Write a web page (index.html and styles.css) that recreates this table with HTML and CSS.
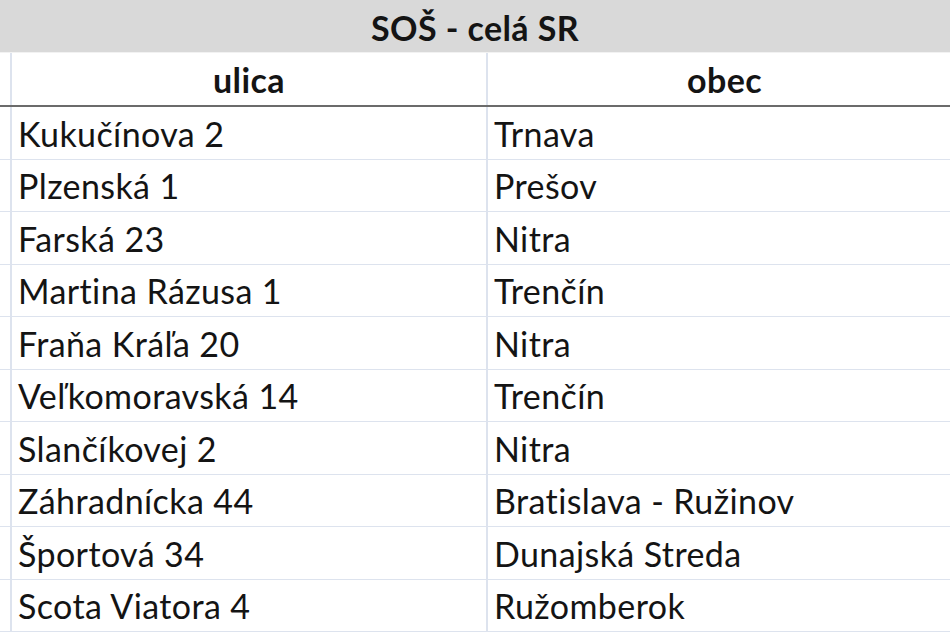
FILE: index.html
```html
<!DOCTYPE html>
<html lang="sk">
<head>
<meta charset="utf-8">
<title>SOŠ - celá SR</title>
<link rel="stylesheet" href="styles.css">
</head>
<body>
<div class="sheet">
  <div class="title">SOŠ - celá SR</div>
  <div class="gap"></div>
  <table class="grid">
    <colgroup>
      <col class="c0">
      <col class="c1">
      <col class="c2">
    </colgroup>
    <thead>
      <tr class="head">
        <th class="edge"></th>
        <th>ulica</th>
        <th>obec</th>
      </tr>
    </thead>
    <tbody>
      <tr><td class="edge"></td><td>Kukučínova 2</td><td>Trnava</td></tr>
      <tr><td class="edge"></td><td>Plzenská 1</td><td>Prešov</td></tr>
      <tr><td class="edge"></td><td>Farská 23</td><td>Nitra</td></tr>
      <tr><td class="edge"></td><td>Martina Rázusa 1</td><td>Trenčín</td></tr>
      <tr><td class="edge"></td><td>Fraňa Kráľa 20</td><td>Nitra</td></tr>
      <tr><td class="edge"></td><td>Veľkomoravská 14</td><td>Trenčín</td></tr>
      <tr><td class="edge"></td><td>Slančíkovej 2</td><td>Nitra</td></tr>
      <tr><td class="edge"></td><td>Záhradnícka 44</td><td>Bratislava - Ružinov</td></tr>
      <tr><td class="edge"></td><td>Športová 34</td><td>Dunajská Streda</td></tr>
      <tr><td class="edge"></td><td>Scota Viatora 4</td><td>Ružomberok</td></tr>
    </tbody>
  </table>
</div>
</body>
</html>
```

FILE: styles.css
```css
html, body {
  margin: 0;
  padding: 0;
  background: #ffffff;
}

body {
  width: 950px;
  height: 634px;
  overflow: hidden;
  font-family: "Lato", "Liberation Sans", sans-serif;
  color: #141414;
  letter-spacing: 0.4px;
}

.sheet {
  width: 961px;
}

.title {
  height: 52px;
  background: #d9d9d9;
  font-weight: 700;
  font-size: 34px;
  line-height: 56px;
  text-align: center;
  padding-right: 11px;
  overflow: hidden;
}

.gap {
  height: 1px;
  background: #f2f2f2;
}

.grid {
  border-collapse: collapse;
  table-layout: fixed;
  width: 961px;
}

.c0 { width: 11px; }
.c1 { width: 476px; }
.c2 { width: 474px; }

.grid th,
.grid td {
  padding: 2px 0 0 6px;
  font-size: 34px;
  line-height: 40px;
  white-space: nowrap;
  border-left: 2px solid #dde3ee;
  vertical-align: middle;
}

.grid .edge {
  border-left: none;
  padding: 0;
}

.head th {
  height: 50px;
  font-weight: 700;
  text-align: center;
  padding: 2px 0 0 0;
  border-bottom: 2px solid #6b6b6b;
}

.grid td {
  height: 49.5px;
  text-align: left;
  border-bottom: 1px solid #dde3ee;
}
```
